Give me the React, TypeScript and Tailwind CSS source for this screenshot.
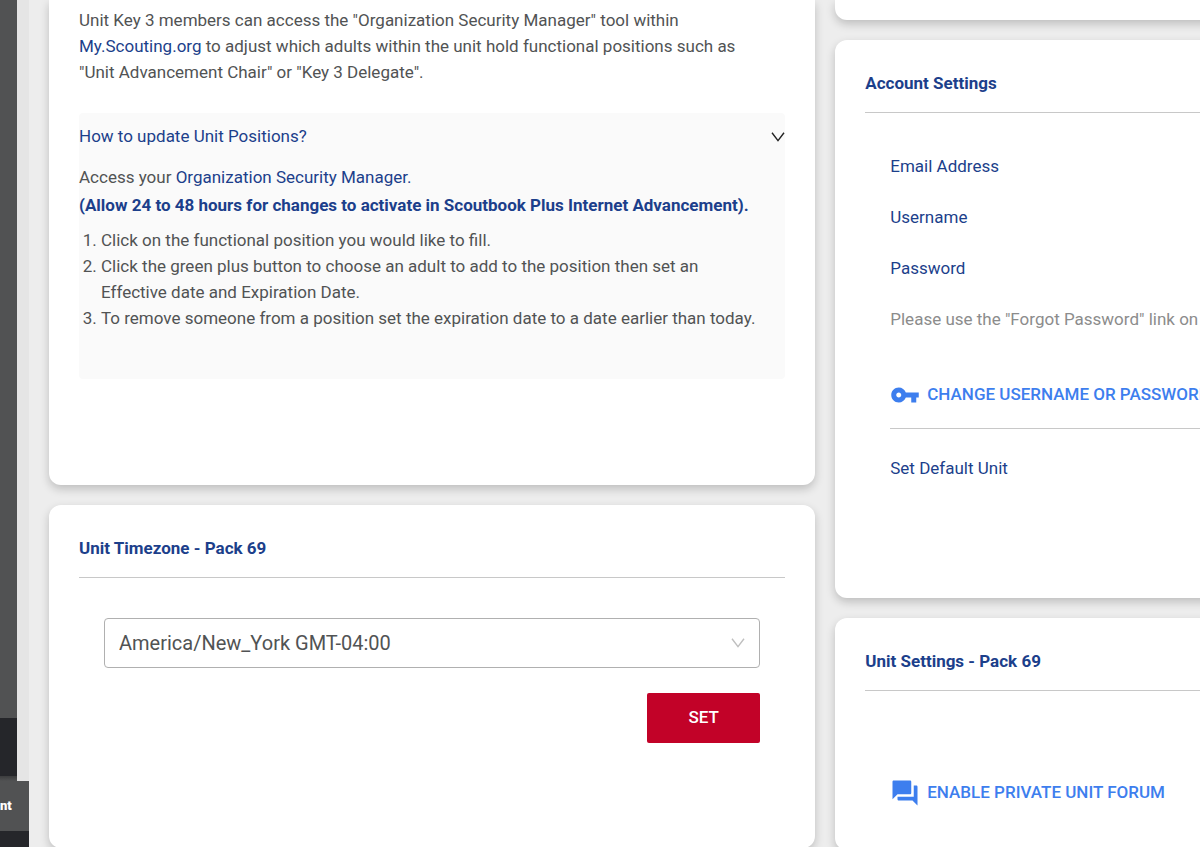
import React from 'react';

interface CardProps {
  title?: string;
  className?: string;
  children?: React.ReactNode;
}

const Card: React.FC<CardProps> = ({ title, className = '', children }) => {
  return (
    <section className={`rounded-xl bg-white px-[30px] shadow-[0_4px_10px_rgba(0,0,0,0.2)] ${className}`}>
      {title && (
        <h2 className="border-b border-[#c8c8c8] pt-[30px] pb-4 leading-[26px] font-bold text-[#1c3f8b]">
          {title}
        </h2>
      )}
      {children}
    </section>
  );
};

const ChevronDown: React.FC<{ className?: string }> = ({ className = '' }) => {
  return (
    <svg className={className} viewBox="0 0 14 10" fill="none" stroke="currentColor" strokeWidth="1.4" aria-hidden="true">
      <path d="M1 0.8 L7 8.6 L13 0.8" />
    </svg>
  );
};

const Sidebar: React.FC = () => {
  return (
    <aside className="flex w-[29px] shrink-0 flex-col bg-[#e5e5e5]">
      <div className="flex w-[17px] flex-1 flex-col bg-[#515253]">
        <div className="flex-1" />
        <div className="h-[58px] bg-[#25262a]" />
        <div className="h-[5px] bg-linear-to-b from-[#3c3d3e] to-[#515253]" />
      </div>
      <div className="flex h-[50px] items-center bg-[#515253] text-[13px] font-black text-white">nt</div>
      <div className="h-4 bg-[#25262a]" />
    </aside>
  );
};

const PositionsCard: React.FC = () => {
  return (
    <Card className="rounded-t-none pt-[7px] pb-[106px]">
      <p className="max-w-[690px] leading-[26px]">
        Unit Key 3 members can access the "Organization Security Manager" tool within{' '}
        <a href="#my-scouting" className="text-[#1c3f8b]">My.Scouting.org</a> to adjust which adults within
        the unit hold functional positions such as "Unit Advancement Chair" or "Key 3 Delegate".
      </p>

      <div className="mt-7 rounded bg-[#fafafa] pb-12">
        <button type="button" aria-expanded="true" className="flex h-12 w-full items-center justify-between text-[#1c3f8b]">
          How to update Unit Positions?
          <ChevronDown className="h-[10px] w-[14px] text-[#222222]" />
        </button>
        <p className="mt-[3px] leading-[26px]">
          Access your <a href="#security-manager" className="text-[#1c3f8b]">Organization Security Manager.</a>
        </p>
        <p className="mt-[2px] leading-[26px] font-bold text-[#1c3f8b]">
          (Allow 24 to 48 hours for changes to activate in Scoutbook Plus Internet Advancement).
        </p>
        <ol className="mt-[9px] list-decimal pl-[22px] leading-[26px]">
          <li>Click on the functional position you would like to fill.</li>
          <li className="pr-16">
            Click the green plus button to choose an adult to add to the position then set an Effective date
            and Expiration Date.
          </li>
          <li>To remove someone from a position set the expiration date to a date earlier than today.</li>
        </ol>
      </div>
    </Card>
  );
};

const TimezoneCard: React.FC = () => {
  return (
    <Card title="Unit Timezone - Pack 69" className="pb-[105px]">
      <form className="flex flex-col items-end gap-[25px] px-[25px] pt-10" onSubmit={(e) => e.preventDefault()}>
        <div className="relative w-full">
          <select
            aria-label="Unit timezone"
            className="h-[50px] w-full appearance-none rounded border border-[#b0b0b0] bg-white px-[14px] text-[20px] text-[#515354]"
          >
            <option>America/New_York GMT-04:00</option>
          </select>
          <ChevronDown className="pointer-events-none absolute top-5 right-[15px] h-[10px] w-[14px] text-[#bfbfbf]" />
        </div>
        <button type="submit" className="h-[50px] w-[113px] rounded-xs bg-[#c20228] font-medium text-white">
          SET
        </button>
      </form>
    </Card>
  );
};

const AccountCard: React.FC = () => {
  return (
    <Card title="Account Settings" className="pb-[117px] text-[#1c3f8b]">
      <div className="px-[25px] pt-10">
        <div className="flex flex-col gap-[25px] leading-[26px]">
          <p>Email Address</p>
          <p>Username</p>
          <p>Password</p>
          <p className="text-[#8c8c8c]">
            Please use the "Forgot Password" link on the login page to reset your password.
          </p>
        </div>
        <div className="mt-[43px] border-b border-[#c8c8c8] pb-[13px]">
          <button type="button" className="flex h-10 items-center gap-[7px] font-medium text-[#3d7eee]">
            <svg className="size-[30px]" viewBox="0 0 24 24" fill="currentColor" aria-hidden="true">
              <path d="M12.65 10C11.83 7.67 9.61 6 7 6c-3.31 0-6 2.69-6 6s2.69 6 6 6c2.61 0 4.83-1.67 5.65-4H17v4h4v-4h2v-4H12.65zM7 14c-1.1 0-2-.9-2-2s.9-2 2-2 2 .9 2 2-.9 2-2 2z" />
            </svg>
            CHANGE USERNAME OR PASSWORD
          </button>
        </div>
        <p className="mt-[26px] leading-[26px]">Set Default Unit</p>
      </div>
    </Card>
  );
};

const UnitSettingsCard: React.FC = () => {
  return (
    <Card title="Unit Settings - Pack 69" className="pb-[37px]">
      <div className="px-[25px] pt-[82px]">
        <button type="button" className="flex h-10 items-center gap-[7px] font-medium text-[#3d7eee]">
          <svg className="size-[30px]" viewBox="0 0 24 24" fill="currentColor" aria-hidden="true">
            <path d="M21 6h-2v9H6v2c0 .55.45 1 1 1h11l4 4V7c0-.55-.45-1-1-1zm-4 6V3c0-.55-.45-1-1-1H3c-.55 0-1 .45-1 1v14l4-4h10c.55 0 1-.45 1-1z" />
          </svg>
          ENABLE PRIVATE UNIT FORUM
        </button>
      </div>
    </Card>
  );
};

export default function App() {
  return (
    <div className="flex h-screen overflow-hidden bg-[#ededed] font-['Roboto',sans-serif] text-[17px] text-[#515354]">
      <Sidebar />
      <div className="min-w-0 flex-1 overflow-hidden">
        {/* Both columns keep their full width and run off to the right */}
        <main className="grid w-[136%] grid-cols-2 items-start gap-5 px-5">
          <div className="flex flex-col gap-5">
            <PositionsCard />
            <TimezoneCard />
          </div>
          <div className="flex flex-col gap-5">
            <Card className="h-5 rounded-t-none" />
            <AccountCard />
            <UnitSettingsCard />
          </div>
        </main>
      </div>
    </div>
  );
}
